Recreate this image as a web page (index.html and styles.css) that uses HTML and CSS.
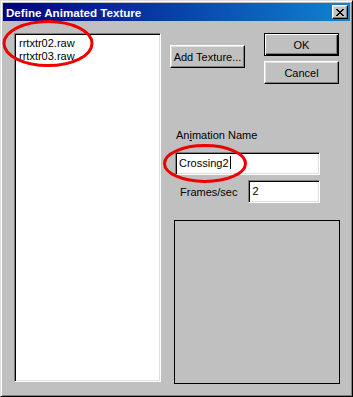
FILE: index.html
```html
<!DOCTYPE html>
<html lang="en">
<head>
  <meta charset="UTF-8">
  <title>Define Animated Texture</title>
  <link rel="stylesheet" href="styles.css">
</head>
<body>
  <div class="window">
    <div class="titlebar">
      <span class="title">Define Animated Texture</span>
      <button class="close-btn" aria-label="Close">
        <svg width="8" height="7" viewBox="0 0 8 7"><path d="M0 0h2v1h1v1h2v-1h1v-1h2v1h-1v1h-1v1h-1v1h1v1h1v1h1v1h-2v-1h-1v-1h-2v1h-1v1h-2v-1h1v-1h1v-1h1v-1h-1v-1h-1v-1h-1z" fill="#000"/></svg>
      </button>
    </div>
    <div class="content">
      <div class="listbox">
        <div class="item">rrtxtr02.raw</div>
        <div class="item">rrtxtr03.raw</div>
      </div>
      <div class="side">
        <div class="top-row">
          <button class="btn add-btn">Add Texture...</button>
          <div class="btn-stack">
            <button class="btn default">OK</button>
            <button class="btn">Cancel</button>
          </div>
        </div>
        <div class="name-label">An<u>i</u>mation Name</div>
        <div class="field name-field">Crossing2<span class="caret"></span></div>
        <div class="frames-row">
          <span class="frames-label">Frames/sec</span>
          <div class="field frames-field">2</div>
        </div>
        <div class="preview"></div>
      </div>
    </div>
    <svg class="marks" width="353" height="397">
      <ellipse cx="48" cy="43.5" rx="44" ry="22" fill="none" stroke="#ee0000" stroke-width="3"/>
      <ellipse cx="205" cy="163.5" rx="40.5" ry="18" fill="none" stroke="#ee0000" stroke-width="3"/>
    </svg>
  </div>
</body>
</html>
```

FILE: styles.css
```css
body {
  margin: 0;
  font-family: "Liberation Sans", Arial, sans-serif;
  font-size: 11px;
  color: #000;
}
.window {
  position: relative;
  width: 353px;
  height: 397px;
  box-sizing: border-box;
  background: #c0c0c0;
  border: 1px solid;
  border-color: #dfdfdf #000 #000 #dfdfdf;
  box-shadow: inset 1px 1px #fff, inset -1px -1px #808080;
  padding: 2px;
}
.titlebar {
  height: 18px;
  display: flex;
  align-items: center;
  justify-content: space-between;
  padding: 0 2px 0 3px;
  background: linear-gradient(to right, #000080, #1084d0);
}
.title {
  color: #fff;
  font-weight: bold;
  font-size: 11.6px;
}
.close-btn {
  width: 16px;
  height: 14px;
  padding: 0;
  display: flex;
  align-items: center;
  justify-content: center;
  background: #c0c0c0;
  border: 1px solid;
  border-color: #fff #000 #000 #fff;
  box-shadow: inset -1px -1px #808080, inset 1px 1px #dfdfdf;
}
.content {
  display: flex;
  align-items: flex-start;
}
.listbox {
  width: 147px;
  height: 349px;
  box-sizing: border-box;
  margin: 12px 0 0 11px;
  background: #fff;
  border: 1px solid;
  border-color: #808080 #fff #fff #808080;
  box-shadow: inset 1px 1px #000, inset -1px -1px #dfdfdf;
  padding: 3px 2px 0 4px;
}
.item {
  line-height: 13px;
}
.side {
  display: flex;
  flex-direction: column;
  align-items: flex-start;
  margin-top: 12px;
}
.top-row {
  display: flex;
  align-items: flex-start;
}
.btn {
  width: 75px;
  height: 23px;
  padding: 0;
  font-family: inherit;
  font-size: 11px;
  color: #000;
  background: #c0c0c0;
  border: 1px solid;
  border-color: #fff #000 #000 #fff;
  box-shadow: inset -1px -1px #808080, inset 1px 1px #dfdfdf;
}
.btn.default {
  border: 1px solid #000;
  box-shadow: inset 1px 1px #fff, inset -1px -1px #000, inset -2px -2px #808080;
}
.add-btn {
  margin: 12px 0 0 9px;
}
.btn-stack {
  display: flex;
  flex-direction: column;
  gap: 5px;
  margin-left: 19px;
}
.name-label {
  margin: 45px 0 0 15px;
  line-height: 13px;
}
.field {
  height: 23px;
  box-sizing: border-box;
  background: #fff;
  border: 1px solid;
  border-color: #808080 #fff #fff #808080;
  box-shadow: inset 1px 1px #000, inset -1px -1px #dfdfdf;
  padding: 3px 3px 0;
  line-height: 14px;
  display: flex;
  align-items: flex-start;
}
.name-field {
  width: 145px;
  margin: 10px 0 0 14px;
}
.caret {
  width: 0;
  height: 13px;
  border-left: 1px solid #000;
  margin-left: 1px;
}
.frames-row {
  display: flex;
  align-items: center;
  margin-top: 5px;
}
.frames-label {
  margin-left: 19px;
}
.frames-field {
  width: 72px;
  margin-left: 11px;
}
.preview {
  width: 166px;
  height: 164px;
  box-sizing: border-box;
  border: 1px solid #000;
  margin: 17px 0 0 13px;
}
.marks {
  position: absolute;
  left: -1px;
  top: -1px;
  pointer-events: none;
}
```
